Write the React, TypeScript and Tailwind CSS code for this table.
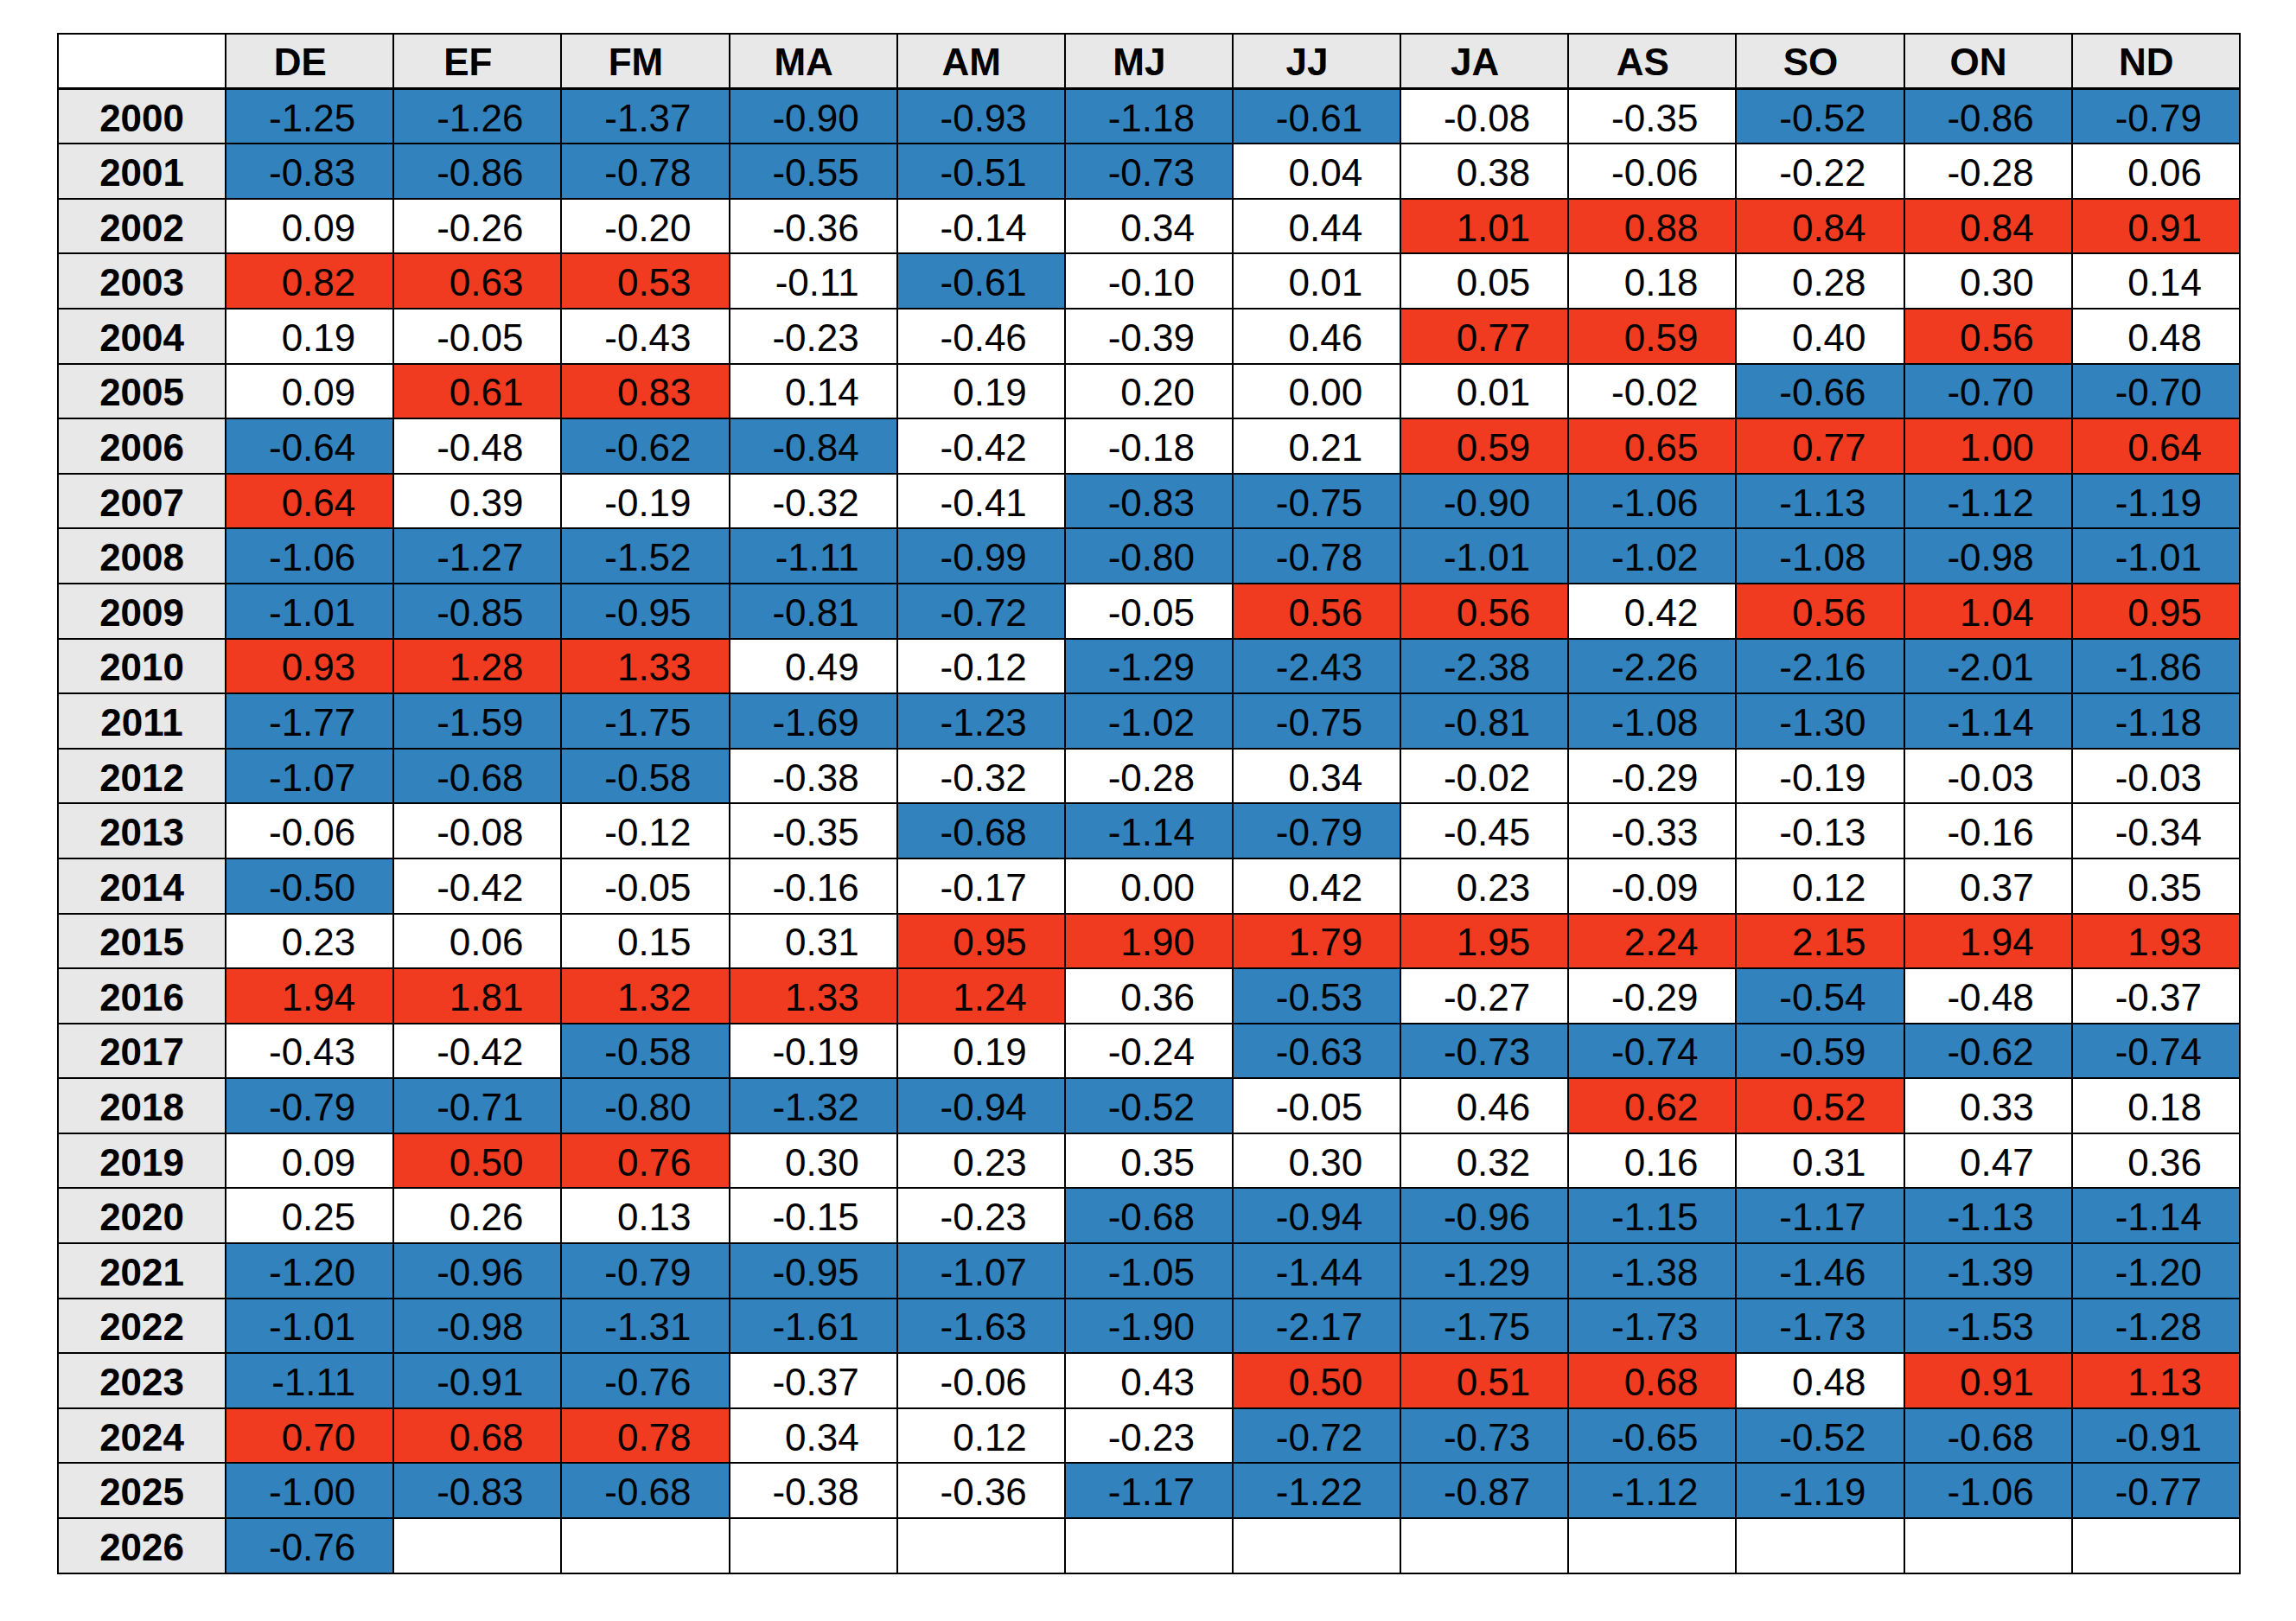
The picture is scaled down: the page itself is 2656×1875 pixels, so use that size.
const months = ["DE", "EF", "FM", "MA", "AM", "MJ", "JJ", "JA", "AS", "SO", "ON", "ND"];

const rows: [string, string[]][] = [
  ["2000", ["-1.25", "-1.26", "-1.37", "-0.90", "-0.93", "-1.18", "-0.61", "-0.08", "-0.35", "-0.52", "-0.86", "-0.79"]],
  ["2001", ["-0.83", "-0.86", "-0.78", "-0.55", "-0.51", "-0.73", "0.04", "0.38", "-0.06", "-0.22", "-0.28", "0.06"]],
  ["2002", ["0.09", "-0.26", "-0.20", "-0.36", "-0.14", "0.34", "0.44", "1.01", "0.88", "0.84", "0.84", "0.91"]],
  ["2003", ["0.82", "0.63", "0.53", "-0.11", "-0.61", "-0.10", "0.01", "0.05", "0.18", "0.28", "0.30", "0.14"]],
  ["2004", ["0.19", "-0.05", "-0.43", "-0.23", "-0.46", "-0.39", "0.46", "0.77", "0.59", "0.40", "0.56", "0.48"]],
  ["2005", ["0.09", "0.61", "0.83", "0.14", "0.19", "0.20", "0.00", "0.01", "-0.02", "-0.66", "-0.70", "-0.70"]],
  ["2006", ["-0.64", "-0.48", "-0.62", "-0.84", "-0.42", "-0.18", "0.21", "0.59", "0.65", "0.77", "1.00", "0.64"]],
  ["2007", ["0.64", "0.39", "-0.19", "-0.32", "-0.41", "-0.83", "-0.75", "-0.90", "-1.06", "-1.13", "-1.12", "-1.19"]],
  ["2008", ["-1.06", "-1.27", "-1.52", "-1.11", "-0.99", "-0.80", "-0.78", "-1.01", "-1.02", "-1.08", "-0.98", "-1.01"]],
  ["2009", ["-1.01", "-0.85", "-0.95", "-0.81", "-0.72", "-0.05", "0.56", "0.56", "0.42", "0.56", "1.04", "0.95"]],
  ["2010", ["0.93", "1.28", "1.33", "0.49", "-0.12", "-1.29", "-2.43", "-2.38", "-2.26", "-2.16", "-2.01", "-1.86"]],
  ["2011", ["-1.77", "-1.59", "-1.75", "-1.69", "-1.23", "-1.02", "-0.75", "-0.81", "-1.08", "-1.30", "-1.14", "-1.18"]],
  ["2012", ["-1.07", "-0.68", "-0.58", "-0.38", "-0.32", "-0.28", "0.34", "-0.02", "-0.29", "-0.19", "-0.03", "-0.03"]],
  ["2013", ["-0.06", "-0.08", "-0.12", "-0.35", "-0.68", "-1.14", "-0.79", "-0.45", "-0.33", "-0.13", "-0.16", "-0.34"]],
  ["2014", ["-0.50", "-0.42", "-0.05", "-0.16", "-0.17", "0.00", "0.42", "0.23", "-0.09", "0.12", "0.37", "0.35"]],
  ["2015", ["0.23", "0.06", "0.15", "0.31", "0.95", "1.90", "1.79", "1.95", "2.24", "2.15", "1.94", "1.93"]],
  ["2016", ["1.94", "1.81", "1.32", "1.33", "1.24", "0.36", "-0.53", "-0.27", "-0.29", "-0.54", "-0.48", "-0.37"]],
  ["2017", ["-0.43", "-0.42", "-0.58", "-0.19", "0.19", "-0.24", "-0.63", "-0.73", "-0.74", "-0.59", "-0.62", "-0.74"]],
  ["2018", ["-0.79", "-0.71", "-0.80", "-1.32", "-0.94", "-0.52", "-0.05", "0.46", "0.62", "0.52", "0.33", "0.18"]],
  ["2019", ["0.09", "0.50", "0.76", "0.30", "0.23", "0.35", "0.30", "0.32", "0.16", "0.31", "0.47", "0.36"]],
  ["2020", ["0.25", "0.26", "0.13", "-0.15", "-0.23", "-0.68", "-0.94", "-0.96", "-1.15", "-1.17", "-1.13", "-1.14"]],
  ["2021", ["-1.20", "-0.96", "-0.79", "-0.95", "-1.07", "-1.05", "-1.44", "-1.29", "-1.38", "-1.46", "-1.39", "-1.20"]],
  ["2022", ["-1.01", "-0.98", "-1.31", "-1.61", "-1.63", "-1.90", "-2.17", "-1.75", "-1.73", "-1.73", "-1.53", "-1.28"]],
  ["2023", ["-1.11", "-0.91", "-0.76", "-0.37", "-0.06", "0.43", "0.50", "0.51", "0.68", "0.48", "0.91", "1.13"]],
  ["2024", ["0.70", "0.68", "0.78", "0.34", "0.12", "-0.23", "-0.72", "-0.73", "-0.65", "-0.52", "-0.68", "-0.91"]],
  ["2025", ["-1.00", "-0.83", "-0.68", "-0.38", "-0.36", "-1.17", "-1.22", "-0.87", "-1.12", "-1.19", "-1.06", "-0.77"]],
  ["2026", ["-0.76"]],
];

function cellColor(v: string | undefined) {
  if (v === undefined) return "bg-white";
  const n = parseFloat(v);
  if (n >= 0.5) return "bg-[#f03b20]";
  if (n <= -0.5) return "bg-[#3182bd]";
  return "bg-white";
}

export default function App() {
  return (
    <div className="min-h-screen bg-white pt-[38px] pl-[66px] font-['Liberation_Sans',Arial,sans-serif] text-black">
      <table className="w-[2526px] table-fixed border-collapse border-2 border-black text-[44px] leading-none">
        <thead>
          <tr className="h-[63.6px]">
            <th className="border-2 border-b-[3px] border-black bg-white" />
            {months.map((m) => (
              <th key={m} className="border-2 border-b-[3px] border-black bg-[#e8e8e8] pt-[2px] pr-[22px] text-center font-bold">
                {m}
              </th>
            ))}
          </tr>
        </thead>
        <tbody>
          {rows.map(([year, vals]) => (
            <tr key={year} className="h-[63.6px]">
              <td className="border-2 border-black bg-[#e8e8e8] pt-[4px] text-center font-bold">{year}</td>
              {months.map((m, i) => (
                <td key={m} className={`border-2 border-black pt-[4px] pr-[43px] text-right ${cellColor(vals[i])}`}>
                  {vals[i] ?? ""}
                </td>
              ))}
            </tr>
          ))}
        </tbody>
      </table>
    </div>
  );
}
